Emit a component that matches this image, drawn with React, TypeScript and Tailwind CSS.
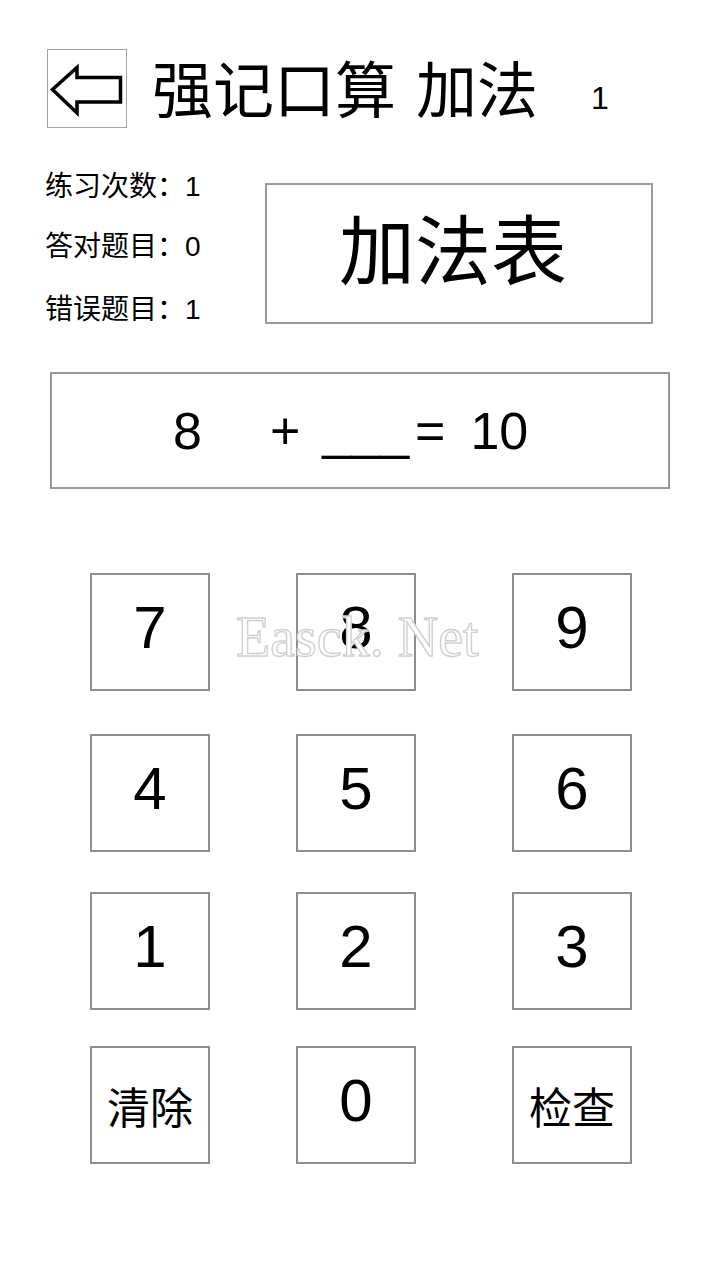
import React from "react";

const rows = [
  { keys: ["7", "8", "9"], gap: "mt-[84px]" },
  { keys: ["4", "5", "6"], gap: "mt-[43px]" },
  { keys: ["1", "2", "3"], gap: "mt-[40px]" },
  { keys: ["清除", "0", "检查"], gap: "mt-[36px]" },
];

const colGap = ["", "ml-[86px]", "ml-[96px]"];

function Key({ label, className }: { label: string; className: string }) {
  const isWord = label.length > 1;
  return (
    <button
      className={`w-[120px] h-[118px] border-2 border-[#8e8e8e] bg-white flex items-center justify-center leading-none ${className} ${
        isWord ? "text-[43px] pt-[8px]" : "text-[60px] pb-[9px]"
      }`}
    >
      {label}
    </button>
  );
}

export default function App() {
  return (
    <div className="relative w-[721px] h-[1281px] bg-white text-black font-['Liberation_Sans','Noto_Sans_CJK_SC',sans-serif] overflow-hidden">
      {/* Header */}
      <div className="flex items-center pl-[47px] pt-[49px]">
        <button className="w-[80px] h-[79px] border border-[#a3a3a3] flex items-center justify-center shrink-0">
          <svg width="78" height="77" viewBox="0 0 78 77" fill="none">
            <path
              d="M4.5 39.5 L29 17.5 L29 27.5 L72.5 27.5 L72.5 52 L29 52 L29 63 Z"
              stroke="black"
              strokeWidth="3.5"
              strokeLinejoin="miter"
            />
          </svg>
        </button>
        <h1 className="ml-[25px] mt-[8px] text-[61px] leading-none font-normal flex">
          <span>强记口算</span>
          <span className="ml-[20px]">加法</span>
        </h1>
        <span className="ml-[53px] mt-[18px] text-[32px] leading-none">1</span>
      </div>

      {/* Stats + table button */}
      <div className="flex items-start pl-[45px] mt-[39px]">
        <div className="w-[220px] flex flex-col text-[28px] leading-[40px]">
          <p>练习次数：1</p>
          <p className="mt-[20px]">答对题目：0</p>
          <p className="mt-[23px]">错误题目：1</p>
        </div>
        <button className="mt-[16px] w-[388px] h-[141px] border-2 border-[#9a9a9a] flex items-center justify-center pr-[12px] pb-[2px] text-[76px] leading-none">
          加法表
        </button>
      </div>

      {/* Equation */}
      <div className="ml-[50px] mt-[42px] w-[620px] h-[117px] border-2 border-[#9a9a9a] flex items-center pl-[121px] text-[52px] leading-none whitespace-pre">
        <span>8</span>
        <span className="ml-[68px]">+</span>
        <span className="ml-[22px]">___</span>
        <span className="ml-[6px]">=</span>
        <span className="ml-[25px]">10</span>
      </div>

      {/* Keypad */}
      <div className="flex flex-col pl-[90px]">
        {rows.map((row, r) => (
          <div key={r} className={`flex ${row.gap}`}>
            {row.keys.map((k, i) => (
              <Key key={k} label={k} className={colGap[i]} />
            ))}
          </div>
        ))}
      </div>

      {/* Watermark */}
      <div className="absolute left-[236px] top-[609px] pointer-events-none font-['Liberation_Serif',serif] text-[56px] leading-none text-white [-webkit-text-stroke:1.4px_#d0d0d0]">
        Easck. Net
      </div>
    </div>
  );
}
